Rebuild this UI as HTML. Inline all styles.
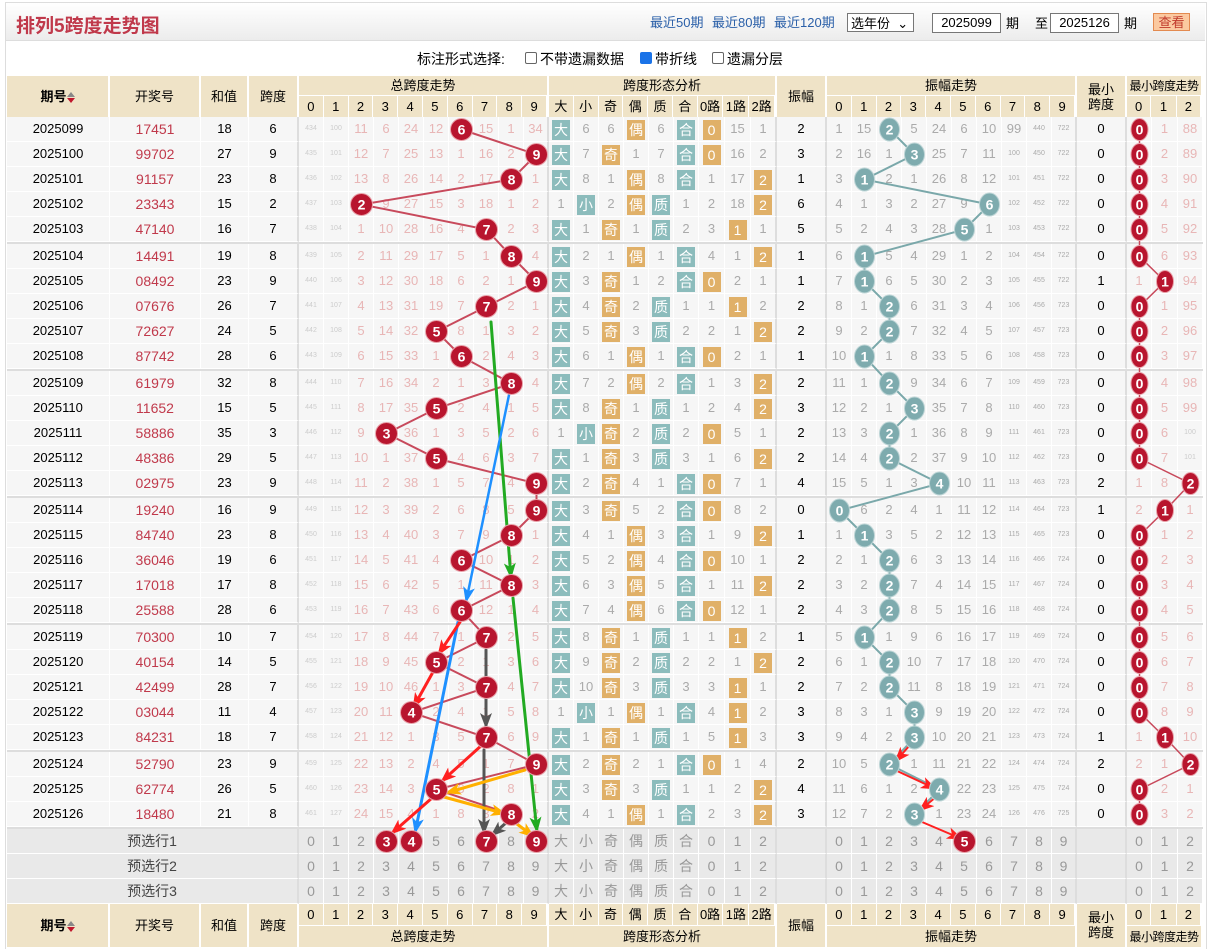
<!DOCTYPE html>
<html><head><meta charset="utf-8"><style>
*{margin:0;padding:0}
body{width:1214px;height:949px;position:relative;background:#fff;font-family:"Liberation Sans","Noto Sans CJK SC",sans-serif;font-size:13px;color:#000;overflow:hidden}
.frame{position:absolute;left:5px;top:2px;width:1200px;height:946px;border:1px solid #ddd;border-bottom:none}
.top{position:absolute;left:6px;top:3px;width:1199px;height:37px;background:linear-gradient(#fff,#ececec);border-bottom:1px solid #ddd}
.title{position:absolute;left:10px;top:8px;font-size:19px;font-weight:bold;color:#c0394b}
.lk{position:absolute;top:12px;color:#2a5fa8;font-size:13px}
.sel{position:absolute;left:847px;top:13px;width:67px;height:19px;border:1px solid #777;background:#fff;font-size:13px;line-height:19px;padding-left:3px;box-sizing:border-box}
.inp{position:absolute;top:13px;width:69px;height:20px;border:1px solid #777;background:#fff;box-sizing:border-box;text-align:center;line-height:18px;font-size:13px}
.tx{position:absolute;top:13px;font-size:13px}
.btn{position:absolute;left:1153px;top:13px;width:37px;height:18px;background:#fbc9a0;border:1px solid #e38a50;color:#c0392b;text-align:center;line-height:17px;font-size:13px;box-sizing:border-box}
.opt{position:absolute;top:49px;font-size:14px}
.cb{position:absolute;top:52px;width:12px;height:12px;border:1px solid #666;border-radius:2px;background:#fff;box-sizing:border-box}
.cb.on{background:#1a73e8;border-color:#1a73e8}
.hd{position:absolute;left:7px;display:flex;height:41px}
.hd>div{background:#efe3c7;border-right:2px solid #fff;box-sizing:border-box;text-align:center}
.hc{line-height:41px;font-size:13px}
.hg{display:flex;flex-direction:column}
.ft .hg{flex-direction:column-reverse}
.ht{height:20px;line-height:20px;border-bottom:1px solid #fff;font-size:13px;white-space:nowrap;overflow:hidden}
.ht.sm{font-size:12px;letter-spacing:-0.5px}
.ft .ht{border-bottom:none;border-top:1px solid #fff;height:22px;line-height:22px}
.hs{display:flex;height:21px}
.hs span{width:25px;line-height:21px;border-right:1px solid #fff;box-sizing:border-box;font-size:13px}
.hs span.w{width:26px}
.sa{display:inline-block;width:8px;height:12px;position:relative;vertical-align:middle}
.sa:before{content:"";position:absolute;left:0;top:0;border:4px solid transparent;border-bottom:5px solid #888;border-top:0}
.sa:after{content:"";position:absolute;left:0;top:6px;border:4px solid transparent;border-top:5px solid #c0182d;border-bottom:0}
.tb{position:absolute;left:7px;top:117px}
.r{display:flex;height:25px;background:#f6f6f6}
.r i{font-style:normal;display:block;height:25px;line-height:24px;text-align:center;box-sizing:border-box;border-right:1px solid #fff;border-bottom:1px solid #fff;font-size:13px;white-space:nowrap;overflow:visible}
.r i:nth-child(1){width:103px}
.r i:nth-child(2){width:91px;color:#c0394b;font-size:14px}
.r i:nth-child(3){width:48px}
.r i:nth-child(4){width:50px}
.r i:nth-child(n+5):nth-child(-n+14){width:25px;color:#e8b6b6}
.r i:nth-child(n+15):nth-child(-n+23){width:25px;color:#aaa}
.r i:nth-child(n+21):nth-child(-n+23){width:26px}
.r i:nth-child(24){width:50px}
.r i:nth-child(n+25):nth-child(-n+34){width:25px;color:#aaa}
.r i:nth-child(35){width:50px}
.r i:nth-child(n+36){width:25px;color:#e8b6b6}
.r i:nth-child(37){width:26px}
.r i:nth-child(4),.r i:nth-child(14),.r i:nth-child(23),.r i:nth-child(24),.r i:nth-child(34),.r i:nth-child(35){border-right:2px solid #ddd}
.r i.t{font-size:7px;color:#ccc}
.r i:nth-child(n+5):nth-child(-n+6).t{color:#ccc}
b{display:inline-block;width:18px;height:20px;line-height:20px;color:#fff;font-weight:normal;font-size:14px;vertical-align:middle}
b.g{background:#8cbcbc}b.o{background:#e0b068}
.sep{height:2px;background:#ddd}
.p{background:#e9e9e9}
.p i{color:#999!important;font-size:14px!important}
.p i:nth-child(1){width:292px;color:#444!important;border-right:2px solid #ddd}
.p i:nth-child(2),.p i:nth-child(3),.p i:nth-child(4){display:none}
svg{position:absolute;left:0;top:0}
</style></head><body>
<div class="frame"></div>
<div class="top">
<div class="title">排列5跨度走势图</div>
</div>
<span class="lk" style="left:650px">最近50期</span>
<span class="lk" style="left:712px">最近80期</span>
<span class="lk" style="left:774px">最近120期</span>
<div class="sel">选年份 &nbsp;⌄</div>
<div class="inp" style="left:932px">2025099</div><span class="tx" style="left:1006px">期</span>
<span class="tx" style="left:1035px">至</span>
<div class="inp" style="left:1050px">2025126</div><span class="tx" style="left:1124px">期</span>
<div class="btn">查看</div>
<span class="opt" style="left:417px">标注形式选择:</span>
<span class="cb" style="left:525px"></span><span class="opt" style="left:540px">不带遗漏数据</span>
<span class="cb on" style="left:640px"></span><span class="opt" style="left:655px">带折线</span>
<span class="cb" style="left:712px"></span><span class="opt" style="left:727px">遗漏分层</span>

<div class="hd" style="top:76px">
<div class="hc" style="width:103px"><strong>期号</strong><span class="sa"></span></div>
<div class="hc" style="width:91px">开奖号</div>
<div class="hc" style="width:48px">和值</div>
<div class="hc" style="width:50px">跨度</div>
<div class="hg" style="width:250px"><div class="ht">总跨度走势</div><div class="hs"><span>0</span><span>1</span><span>2</span><span>3</span><span>4</span><span>5</span><span>6</span><span>7</span><span>8</span><span>9</span></div></div>
<div class="hg" style="width:228px"><div class="ht">跨度形态分析</div><div class="hs"><span>大</span><span>小</span><span>奇</span><span>偶</span><span>质</span><span>合</span><span class="w">0路</span><span class="w">1路</span><span class="w">2路</span></div></div>
<div class="hc" style="width:50px">振幅</div>
<div class="hg" style="width:250px"><div class="ht">振幅走势</div><div class="hs"><span>0</span><span>1</span><span>2</span><span>3</span><span>4</span><span>5</span><span>6</span><span>7</span><span>8</span><span>9</span></div></div>
<div class="hc" style="width:50px;line-height:15px;padding-top:6px">最小<br>跨度</div>
<div class="hg" style="width:76px"><div class="ht sm">最小跨度走势</div><div class="hs"><span>0</span><span class="w">1</span><span>2</span></div></div>
</div>

<div class="tb">
<div class="r"><i>2025099</i><i>17451</i><i>18</i><i>6</i><i class=t>434</i><i class=t>100</i><i>11</i><i>6</i><i>24</i><i>12</i><i></i><i>15</i><i>1</i><i>34</i><i><b class=g>大</b></i><i>6</i><i>6</i><i><b class=o>偶</b></i><i>6</i><i><b class=g>合</b></i><i><b class=o>0</b></i><i>15</i><i>1</i><i>2</i><i>1</i><i>15</i><i></i><i>5</i><i>24</i><i>6</i><i>10</i><i>99</i><i class=t>440</i><i class=t>722</i><i>0</i><i></i><i>1</i><i>88</i></div>
<div class="r"><i>2025100</i><i>99702</i><i>27</i><i>9</i><i class=t>435</i><i class=t>101</i><i>12</i><i>7</i><i>25</i><i>13</i><i>1</i><i>16</i><i>2</i><i></i><i><b class=g>大</b></i><i>7</i><i><b class=o>奇</b></i><i>1</i><i>7</i><i><b class=g>合</b></i><i><b class=o>0</b></i><i>16</i><i>2</i><i>3</i><i>2</i><i>16</i><i>1</i><i></i><i>25</i><i>7</i><i>11</i><i class=t>100</i><i class=t>450</i><i class=t>722</i><i>0</i><i></i><i>2</i><i>89</i></div>
<div class="r"><i>2025101</i><i>91157</i><i>23</i><i>8</i><i class=t>436</i><i class=t>102</i><i>13</i><i>8</i><i>26</i><i>14</i><i>2</i><i>17</i><i></i><i>1</i><i><b class=g>大</b></i><i>8</i><i>1</i><i><b class=o>偶</b></i><i>8</i><i><b class=g>合</b></i><i>1</i><i>17</i><i><b class=o>2</b></i><i>1</i><i>3</i><i></i><i>2</i><i>1</i><i>26</i><i>8</i><i>12</i><i class=t>101</i><i class=t>451</i><i class=t>722</i><i>0</i><i></i><i>3</i><i>90</i></div>
<div class="r"><i>2025102</i><i>23343</i><i>15</i><i>2</i><i class=t>437</i><i class=t>103</i><i></i><i>9</i><i>27</i><i>15</i><i>3</i><i>18</i><i>1</i><i>2</i><i>1</i><i><b class=g>小</b></i><i>2</i><i><b class=o>偶</b></i><i><b class=g>质</b></i><i>1</i><i>2</i><i>18</i><i><b class=o>2</b></i><i>6</i><i>4</i><i>1</i><i>3</i><i>2</i><i>27</i><i>9</i><i></i><i class=t>102</i><i class=t>452</i><i class=t>722</i><i>0</i><i></i><i>4</i><i>91</i></div>
<div class="r"><i>2025103</i><i>47140</i><i>16</i><i>7</i><i class=t>438</i><i class=t>104</i><i>1</i><i>10</i><i>28</i><i>16</i><i>4</i><i></i><i>2</i><i>3</i><i><b class=g>大</b></i><i>1</i><i><b class=o>奇</b></i><i>1</i><i><b class=g>质</b></i><i>2</i><i>3</i><i><b class=o>1</b></i><i>1</i><i>5</i><i>5</i><i>2</i><i>4</i><i>3</i><i>28</i><i></i><i>1</i><i class=t>103</i><i class=t>453</i><i class=t>722</i><i>0</i><i></i><i>5</i><i>92</i></div>
<div class="sep"></div>
<div class="r"><i>2025104</i><i>14491</i><i>19</i><i>8</i><i class=t>439</i><i class=t>105</i><i>2</i><i>11</i><i>29</i><i>17</i><i>5</i><i>1</i><i></i><i>4</i><i><b class=g>大</b></i><i>2</i><i>1</i><i><b class=o>偶</b></i><i>1</i><i><b class=g>合</b></i><i>4</i><i>1</i><i><b class=o>2</b></i><i>1</i><i>6</i><i></i><i>5</i><i>4</i><i>29</i><i>1</i><i>2</i><i class=t>104</i><i class=t>454</i><i class=t>722</i><i>0</i><i></i><i>6</i><i>93</i></div>
<div class="r"><i>2025105</i><i>08492</i><i>23</i><i>9</i><i class=t>440</i><i class=t>106</i><i>3</i><i>12</i><i>30</i><i>18</i><i>6</i><i>2</i><i>1</i><i></i><i><b class=g>大</b></i><i>3</i><i><b class=o>奇</b></i><i>1</i><i>2</i><i><b class=g>合</b></i><i><b class=o>0</b></i><i>2</i><i>1</i><i>1</i><i>7</i><i></i><i>6</i><i>5</i><i>30</i><i>2</i><i>3</i><i class=t>105</i><i class=t>455</i><i class=t>722</i><i>1</i><i>1</i><i></i><i>94</i></div>
<div class="r"><i>2025106</i><i>07676</i><i>26</i><i>7</i><i class=t>441</i><i class=t>107</i><i>4</i><i>13</i><i>31</i><i>19</i><i>7</i><i></i><i>2</i><i>1</i><i><b class=g>大</b></i><i>4</i><i><b class=o>奇</b></i><i>2</i><i><b class=g>质</b></i><i>1</i><i>1</i><i><b class=o>1</b></i><i>2</i><i>2</i><i>8</i><i>1</i><i></i><i>6</i><i>31</i><i>3</i><i>4</i><i class=t>106</i><i class=t>456</i><i class=t>723</i><i>0</i><i></i><i>1</i><i>95</i></div>
<div class="r"><i>2025107</i><i>72627</i><i>24</i><i>5</i><i class=t>442</i><i class=t>108</i><i>5</i><i>14</i><i>32</i><i></i><i>8</i><i>1</i><i>3</i><i>2</i><i><b class=g>大</b></i><i>5</i><i><b class=o>奇</b></i><i>3</i><i><b class=g>质</b></i><i>2</i><i>2</i><i>1</i><i><b class=o>2</b></i><i>2</i><i>9</i><i>2</i><i></i><i>7</i><i>32</i><i>4</i><i>5</i><i class=t>107</i><i class=t>457</i><i class=t>723</i><i>0</i><i></i><i>2</i><i>96</i></div>
<div class="r"><i>2025108</i><i>87742</i><i>28</i><i>6</i><i class=t>443</i><i class=t>109</i><i>6</i><i>15</i><i>33</i><i>1</i><i></i><i>2</i><i>4</i><i>3</i><i><b class=g>大</b></i><i>6</i><i>1</i><i><b class=o>偶</b></i><i>1</i><i><b class=g>合</b></i><i><b class=o>0</b></i><i>2</i><i>1</i><i>1</i><i>10</i><i></i><i>1</i><i>8</i><i>33</i><i>5</i><i>6</i><i class=t>108</i><i class=t>458</i><i class=t>723</i><i>0</i><i></i><i>3</i><i>97</i></div>
<div class="sep"></div>
<div class="r"><i>2025109</i><i>61979</i><i>32</i><i>8</i><i class=t>444</i><i class=t>110</i><i>7</i><i>16</i><i>34</i><i>2</i><i>1</i><i>3</i><i></i><i>4</i><i><b class=g>大</b></i><i>7</i><i>2</i><i><b class=o>偶</b></i><i>2</i><i><b class=g>合</b></i><i>1</i><i>3</i><i><b class=o>2</b></i><i>2</i><i>11</i><i>1</i><i></i><i>9</i><i>34</i><i>6</i><i>7</i><i class=t>109</i><i class=t>459</i><i class=t>723</i><i>0</i><i></i><i>4</i><i>98</i></div>
<div class="r"><i>2025110</i><i>11652</i><i>15</i><i>5</i><i class=t>445</i><i class=t>111</i><i>8</i><i>17</i><i>35</i><i></i><i>2</i><i>4</i><i>1</i><i>5</i><i><b class=g>大</b></i><i>8</i><i><b class=o>奇</b></i><i>1</i><i><b class=g>质</b></i><i>1</i><i>2</i><i>4</i><i><b class=o>2</b></i><i>3</i><i>12</i><i>2</i><i>1</i><i></i><i>35</i><i>7</i><i>8</i><i class=t>110</i><i class=t>460</i><i class=t>723</i><i>0</i><i></i><i>5</i><i>99</i></div>
<div class="r"><i>2025111</i><i>58886</i><i>35</i><i>3</i><i class=t>446</i><i class=t>112</i><i>9</i><i></i><i>36</i><i>1</i><i>3</i><i>5</i><i>2</i><i>6</i><i>1</i><i><b class=g>小</b></i><i><b class=o>奇</b></i><i>2</i><i><b class=g>质</b></i><i>2</i><i><b class=o>0</b></i><i>5</i><i>1</i><i>2</i><i>13</i><i>3</i><i></i><i>1</i><i>36</i><i>8</i><i>9</i><i class=t>111</i><i class=t>461</i><i class=t>723</i><i>0</i><i></i><i>6</i><i class=t>100</i></div>
<div class="r"><i>2025112</i><i>48386</i><i>29</i><i>5</i><i class=t>447</i><i class=t>113</i><i>10</i><i>1</i><i>37</i><i></i><i>4</i><i>6</i><i>3</i><i>7</i><i><b class=g>大</b></i><i>1</i><i><b class=o>奇</b></i><i>3</i><i><b class=g>质</b></i><i>3</i><i>1</i><i>6</i><i><b class=o>2</b></i><i>2</i><i>14</i><i>4</i><i></i><i>2</i><i>37</i><i>9</i><i>10</i><i class=t>112</i><i class=t>462</i><i class=t>723</i><i>0</i><i></i><i>7</i><i class=t>101</i></div>
<div class="r"><i>2025113</i><i>02975</i><i>23</i><i>9</i><i class=t>448</i><i class=t>114</i><i>11</i><i>2</i><i>38</i><i>1</i><i>5</i><i>7</i><i>4</i><i></i><i><b class=g>大</b></i><i>2</i><i><b class=o>奇</b></i><i>4</i><i>1</i><i><b class=g>合</b></i><i><b class=o>0</b></i><i>7</i><i>1</i><i>4</i><i>15</i><i>5</i><i>1</i><i>3</i><i></i><i>10</i><i>11</i><i class=t>113</i><i class=t>463</i><i class=t>723</i><i>2</i><i>1</i><i>8</i><i></i></div>
<div class="sep"></div>
<div class="r"><i>2025114</i><i>19240</i><i>16</i><i>9</i><i class=t>449</i><i class=t>115</i><i>12</i><i>3</i><i>39</i><i>2</i><i>6</i><i>8</i><i>5</i><i></i><i><b class=g>大</b></i><i>3</i><i><b class=o>奇</b></i><i>5</i><i>2</i><i><b class=g>合</b></i><i><b class=o>0</b></i><i>8</i><i>2</i><i>0</i><i></i><i>6</i><i>2</i><i>4</i><i>1</i><i>11</i><i>12</i><i class=t>114</i><i class=t>464</i><i class=t>723</i><i>1</i><i>2</i><i></i><i>1</i></div>
<div class="r"><i>2025115</i><i>84740</i><i>23</i><i>8</i><i class=t>450</i><i class=t>116</i><i>13</i><i>4</i><i>40</i><i>3</i><i>7</i><i>9</i><i></i><i>1</i><i><b class=g>大</b></i><i>4</i><i>1</i><i><b class=o>偶</b></i><i>3</i><i><b class=g>合</b></i><i>1</i><i>9</i><i><b class=o>2</b></i><i>1</i><i>1</i><i></i><i>3</i><i>5</i><i>2</i><i>12</i><i>13</i><i class=t>115</i><i class=t>465</i><i class=t>723</i><i>0</i><i></i><i>1</i><i>2</i></div>
<div class="r"><i>2025116</i><i>36046</i><i>19</i><i>6</i><i class=t>451</i><i class=t>117</i><i>14</i><i>5</i><i>41</i><i>4</i><i></i><i>10</i><i>1</i><i>2</i><i><b class=g>大</b></i><i>5</i><i>2</i><i><b class=o>偶</b></i><i>4</i><i><b class=g>合</b></i><i><b class=o>0</b></i><i>10</i><i>1</i><i>2</i><i>2</i><i>1</i><i></i><i>6</i><i>3</i><i>13</i><i>14</i><i class=t>116</i><i class=t>466</i><i class=t>724</i><i>0</i><i></i><i>2</i><i>3</i></div>
<div class="r"><i>2025117</i><i>17018</i><i>17</i><i>8</i><i class=t>452</i><i class=t>118</i><i>15</i><i>6</i><i>42</i><i>5</i><i>1</i><i>11</i><i></i><i>3</i><i><b class=g>大</b></i><i>6</i><i>3</i><i><b class=o>偶</b></i><i>5</i><i><b class=g>合</b></i><i>1</i><i>11</i><i><b class=o>2</b></i><i>2</i><i>3</i><i>2</i><i></i><i>7</i><i>4</i><i>14</i><i>15</i><i class=t>117</i><i class=t>467</i><i class=t>724</i><i>0</i><i></i><i>3</i><i>4</i></div>
<div class="r"><i>2025118</i><i>25588</i><i>28</i><i>6</i><i class=t>453</i><i class=t>119</i><i>16</i><i>7</i><i>43</i><i>6</i><i></i><i>12</i><i>1</i><i>4</i><i><b class=g>大</b></i><i>7</i><i>4</i><i><b class=o>偶</b></i><i>6</i><i><b class=g>合</b></i><i><b class=o>0</b></i><i>12</i><i>1</i><i>2</i><i>4</i><i>3</i><i></i><i>8</i><i>5</i><i>15</i><i>16</i><i class=t>118</i><i class=t>468</i><i class=t>724</i><i>0</i><i></i><i>4</i><i>5</i></div>
<div class="sep"></div>
<div class="r"><i>2025119</i><i>70300</i><i>10</i><i>7</i><i class=t>454</i><i class=t>120</i><i>17</i><i>8</i><i>44</i><i>7</i><i>1</i><i></i><i>2</i><i>5</i><i><b class=g>大</b></i><i>8</i><i><b class=o>奇</b></i><i>1</i><i><b class=g>质</b></i><i>1</i><i>1</i><i><b class=o>1</b></i><i>2</i><i>1</i><i>5</i><i></i><i>1</i><i>9</i><i>6</i><i>16</i><i>17</i><i class=t>119</i><i class=t>469</i><i class=t>724</i><i>0</i><i></i><i>5</i><i>6</i></div>
<div class="r"><i>2025120</i><i>40154</i><i>14</i><i>5</i><i class=t>455</i><i class=t>121</i><i>18</i><i>9</i><i>45</i><i></i><i>2</i><i>1</i><i>3</i><i>6</i><i><b class=g>大</b></i><i>9</i><i><b class=o>奇</b></i><i>2</i><i><b class=g>质</b></i><i>2</i><i>2</i><i>1</i><i><b class=o>2</b></i><i>2</i><i>6</i><i>1</i><i></i><i>10</i><i>7</i><i>17</i><i>18</i><i class=t>120</i><i class=t>470</i><i class=t>724</i><i>0</i><i></i><i>6</i><i>7</i></div>
<div class="r"><i>2025121</i><i>42499</i><i>28</i><i>7</i><i class=t>456</i><i class=t>122</i><i>19</i><i>10</i><i>46</i><i>1</i><i>3</i><i></i><i>4</i><i>7</i><i><b class=g>大</b></i><i>10</i><i><b class=o>奇</b></i><i>3</i><i><b class=g>质</b></i><i>3</i><i>3</i><i><b class=o>1</b></i><i>1</i><i>2</i><i>7</i><i>2</i><i></i><i>11</i><i>8</i><i>18</i><i>19</i><i class=t>121</i><i class=t>471</i><i class=t>724</i><i>0</i><i></i><i>7</i><i>8</i></div>
<div class="r"><i>2025122</i><i>03044</i><i>11</i><i>4</i><i class=t>457</i><i class=t>123</i><i>20</i><i>11</i><i></i><i>2</i><i>4</i><i>1</i><i>5</i><i>8</i><i>1</i><i><b class=g>小</b></i><i>1</i><i><b class=o>偶</b></i><i>1</i><i><b class=g>合</b></i><i>4</i><i><b class=o>1</b></i><i>2</i><i>3</i><i>8</i><i>3</i><i>1</i><i></i><i>9</i><i>19</i><i>20</i><i class=t>122</i><i class=t>472</i><i class=t>724</i><i>0</i><i></i><i>8</i><i>9</i></div>
<div class="r"><i>2025123</i><i>84231</i><i>18</i><i>7</i><i class=t>458</i><i class=t>124</i><i>21</i><i>12</i><i>1</i><i>3</i><i>5</i><i></i><i>6</i><i>9</i><i><b class=g>大</b></i><i>1</i><i><b class=o>奇</b></i><i>1</i><i><b class=g>质</b></i><i>1</i><i>5</i><i><b class=o>1</b></i><i>3</i><i>3</i><i>9</i><i>4</i><i>2</i><i></i><i>10</i><i>20</i><i>21</i><i class=t>123</i><i class=t>473</i><i class=t>724</i><i>1</i><i>1</i><i></i><i>10</i></div>
<div class="sep"></div>
<div class="r"><i>2025124</i><i>52790</i><i>23</i><i>9</i><i class=t>459</i><i class=t>125</i><i>22</i><i>13</i><i>2</i><i>4</i><i>5</i><i>1</i><i>7</i><i></i><i><b class=g>大</b></i><i>2</i><i><b class=o>奇</b></i><i>2</i><i>1</i><i><b class=g>合</b></i><i><b class=o>0</b></i><i>1</i><i>4</i><i>2</i><i>10</i><i>5</i><i></i><i>1</i><i>11</i><i>21</i><i>22</i><i class=t>124</i><i class=t>474</i><i class=t>724</i><i>2</i><i>2</i><i>1</i><i></i></div>
<div class="r"><i>2025125</i><i>62774</i><i>26</i><i>5</i><i class=t>460</i><i class=t>126</i><i>23</i><i>14</i><i>3</i><i></i><i>6</i><i>2</i><i>8</i><i>1</i><i><b class=g>大</b></i><i>3</i><i><b class=o>奇</b></i><i>3</i><i><b class=g>质</b></i><i>1</i><i>1</i><i>2</i><i><b class=o>2</b></i><i>4</i><i>11</i><i>6</i><i>1</i><i>2</i><i></i><i>22</i><i>23</i><i class=t>125</i><i class=t>475</i><i class=t>724</i><i>0</i><i></i><i>2</i><i>1</i></div>
<div class="r"><i>2025126</i><i>18480</i><i>21</i><i>8</i><i class=t>461</i><i class=t>127</i><i>24</i><i>15</i><i>4</i><i>1</i><i>8</i><i>3</i><i></i><i>2</i><i><b class=g>大</b></i><i>4</i><i>1</i><i><b class=o>偶</b></i><i>1</i><i><b class=g>合</b></i><i>2</i><i>3</i><i><b class=o>2</b></i><i>3</i><i>12</i><i>7</i><i>2</i><i></i><i>1</i><i>23</i><i>24</i><i class=t>126</i><i class=t>476</i><i class=t>725</i><i>0</i><i></i><i>3</i><i>2</i></div>
<div class="sep"></div>
<div class="r p"><i>预选行1</i><i></i><i></i><i></i><i>0</i><i>1</i><i>2</i><i></i><i></i><i>5</i><i>6</i><i></i><i>8</i><i></i><i>大</i><i>小</i><i>奇</i><i>偶</i><i>质</i><i>合</i><i>0</i><i>1</i><i>2</i><i></i><i>0</i><i>1</i><i>2</i><i>3</i><i>4</i><i></i><i>6</i><i>7</i><i>8</i><i>9</i><i></i><i>0</i><i>1</i><i>2</i></div>
<div class="r p"><i>预选行2</i><i></i><i></i><i></i><i>0</i><i>1</i><i>2</i><i>3</i><i>4</i><i>5</i><i>6</i><i>7</i><i>8</i><i>9</i><i>大</i><i>小</i><i>奇</i><i>偶</i><i>质</i><i>合</i><i>0</i><i>1</i><i>2</i><i></i><i>0</i><i>1</i><i>2</i><i>3</i><i>4</i><i>5</i><i>6</i><i>7</i><i>8</i><i>9</i><i></i><i>0</i><i>1</i><i>2</i></div>
<div class="r p"><i>预选行3</i><i></i><i></i><i></i><i>0</i><i>1</i><i>2</i><i>3</i><i>4</i><i>5</i><i>6</i><i>7</i><i>8</i><i>9</i><i>大</i><i>小</i><i>奇</i><i>偶</i><i>质</i><i>合</i><i>0</i><i>1</i><i>2</i><i></i><i>0</i><i>1</i><i>2</i><i>3</i><i>4</i><i>5</i><i>6</i><i>7</i><i>8</i><i>9</i><i></i><i>0</i><i>1</i><i>2</i></div>
</div>

<div class="hd ft" style="top:904px;height:43px">
<div class="hc" style="width:103px;line-height:43px"><strong>期号</strong><span class="sa"></span></div>
<div class="hc" style="width:91px;line-height:43px">开奖号</div>
<div class="hc" style="width:48px;line-height:43px">和值</div>
<div class="hc" style="width:50px;line-height:43px">跨度</div>
<div class="hg" style="width:250px"><div class="ht">总跨度走势</div><div class="hs"><span>0</span><span>1</span><span>2</span><span>3</span><span>4</span><span>5</span><span>6</span><span>7</span><span>8</span><span>9</span></div></div>
<div class="hg" style="width:228px"><div class="ht">跨度形态分析</div><div class="hs"><span>大</span><span>小</span><span>奇</span><span>偶</span><span>质</span><span>合</span><span class="w">0路</span><span class="w">1路</span><span class="w">2路</span></div></div>
<div class="hc" style="width:50px;line-height:43px">振幅</div>
<div class="hg" style="width:250px"><div class="ht">振幅走势</div><div class="hs"><span>0</span><span>1</span><span>2</span><span>3</span><span>4</span><span>5</span><span>6</span><span>7</span><span>8</span><span>9</span></div></div>
<div class="hc" style="width:50px;line-height:15px;padding-top:6px">最小<br>跨度</div>
<div class="hg" style="width:76px"><div class="ht sm">最小跨度走势</div><div class="hs"><span>0</span><span class="w">1</span><span>2</span></div></div>
</div>

<svg width="1214" height="949" viewBox="0 0 1214 949">
<defs>
<marker id="mR" viewBox="0 0 16 12" refX="15" refY="6" markerWidth="16" markerHeight="12" markerUnits="userSpaceOnUse" orient="auto"><path d="M0,0 L16,6 L0,12 L4,6z" fill="#ff2020"/></marker>
<marker id="mB" viewBox="0 0 16 12" refX="15" refY="6" markerWidth="16" markerHeight="12" markerUnits="userSpaceOnUse" orient="auto"><path d="M0,0 L16,6 L0,12 L4,6z" fill="#1e90ff"/></marker>
<marker id="mG" viewBox="0 0 16 12" refX="15" refY="6" markerWidth="16" markerHeight="12" markerUnits="userSpaceOnUse" orient="auto"><path d="M0,0 L16,6 L0,12 L4,6z" fill="#22aa22"/></marker>
<marker id="mK" viewBox="0 0 16 12" refX="15" refY="6" markerWidth="16" markerHeight="12" markerUnits="userSpaceOnUse" orient="auto"><path d="M0,0 L16,6 L0,12 L4,6z" fill="#555"/></marker>
<marker id="mO" viewBox="0 0 16 12" refX="15" refY="6" markerWidth="16" markerHeight="12" markerUnits="userSpaceOnUse" orient="auto"><path d="M0,0 L16,6 L0,12 L4,6z" fill="#ffb000"/></marker>
</defs>
<polyline fill="none" stroke="#c84a5c" stroke-width="2" points="461.5,129.5 536.5,154.5 511.5,179.5 361.5,204.5 486.5,229.5 511.5,256.5 536.5,281.5 486.5,306.5 436.5,331.5 461.5,356.5 511.5,383.5 436.5,408.5 386.5,433.5 436.5,458.5 536.5,483.5 536.5,510.5 511.5,535.5 461.5,560.5 511.5,585.5 461.5,610.5 486.5,637.5 436.5,662.5 486.5,687.5 411.5,712.5 486.5,737.5 536.5,764.5 436.5,789.5 511.5,814.5"/>
<polyline fill="none" stroke="#7aa8aa" stroke-width="2" points="889.5,129.5 914.5,154.5 864.5,179.5 989.5,204.5 964.5,229.5 864.5,256.5 864.5,281.5 889.5,306.5 889.5,331.5 864.5,356.5 889.5,383.5 914.5,408.5 889.5,433.5 889.5,458.5 939.5,483.5 839.5,510.5 864.5,535.5 889.5,560.5 889.5,585.5 889.5,610.5 864.5,637.5 889.5,662.5 889.5,687.5 914.5,712.5 914.5,737.5 889.5,764.5 939.5,789.5 914.5,814.5"/>
<polyline fill="none" stroke="#c84a5c" stroke-width="1.5" points="1139.5,129.5 1139.5,256.5 1165,281.5 1139.5,306.5 1139.5,458.5 1190.5,483.5 1165,510.5 1139.5,535.5 1139.5,712.5 1165,737.5 1190.5,764.5 1139.5,789.5 1139.5,814.5"/>
<g stroke-linecap="round">
<line x1="491" y1="322" x2="511" y2="578" stroke="#22aa22" stroke-width="3" marker-end="url(#mG)"/>
<line x1="513" y1="598" x2="537" y2="832" stroke="#22aa22" stroke-width="3" marker-end="url(#mG)"/>
<line x1="509" y1="395" x2="466" y2="602" stroke="#1e90ff" stroke-width="2.5" marker-end="url(#mB)"/>
<line x1="458" y1="622" x2="415" y2="833" stroke="#1e90ff" stroke-width="3" marker-end="url(#mB)"/>
<line x1="460" y1="622" x2="438" y2="655" stroke="#ff2020" stroke-width="3" marker-end="url(#mR)"/>
<line x1="433" y1="672" x2="413" y2="708" stroke="#ff2020" stroke-width="3" marker-end="url(#mR)"/>
<line x1="482" y1="745" x2="441" y2="782" stroke="#ff2020" stroke-width="3" marker-end="url(#mR)"/>
<line x1="432" y1="798" x2="391" y2="834" stroke="#ff2020" stroke-width="3" marker-end="url(#mR)"/>
<line x1="486" y1="650" x2="486" y2="728" stroke="#555" stroke-width="3" marker-end="url(#mK)"/>
<line x1="484" y1="750" x2="484" y2="834" stroke="#555" stroke-width="3" marker-end="url(#mK)"/>
<line x1="507" y1="822" x2="491" y2="836" stroke="#555" stroke-width="3" marker-end="url(#mK)"/>
<line x1="525" y1="770" x2="446" y2="793" stroke="#ffb000" stroke-width="3" marker-end="url(#mO)"/>
<line x1="444" y1="797" x2="506" y2="814" stroke="#ffb000" stroke-width="3" marker-end="url(#mO)"/>
<line x1="517" y1="824" x2="534" y2="837" stroke="#ffb000" stroke-width="3" marker-end="url(#mO)"/>
<line x1="910" y1="745" x2="895" y2="762" stroke="#ff2020" stroke-width="2" marker-end="url(#mR)"/>
<line x1="895" y1="770" x2="936" y2="789" stroke="#ff2020" stroke-width="2" marker-end="url(#mR)"/>
<line x1="936" y1="797" x2="919" y2="811" stroke="#ff2020" stroke-width="2" marker-end="url(#mR)"/>
<line x1="922" y1="822" x2="962" y2="839" stroke="#ff2020" stroke-width="2" marker-end="url(#mR)"/>
</g>
<g fill="#b8152e" stroke="#e8a0a8" stroke-width="1">
<circle cx="461.5" cy="129.5" r="11"/><circle cx="536.5" cy="154.5" r="11"/><circle cx="511.5" cy="179.5" r="11"/><circle cx="361.5" cy="204.5" r="11"/><circle cx="486.5" cy="229.5" r="11"/>
<circle cx="511.5" cy="256.5" r="11"/><circle cx="536.5" cy="281.5" r="11"/><circle cx="486.5" cy="306.5" r="11"/><circle cx="436.5" cy="331.5" r="11"/><circle cx="461.5" cy="356.5" r="11"/>
<circle cx="511.5" cy="383.5" r="11"/><circle cx="436.5" cy="408.5" r="11"/><circle cx="386.5" cy="433.5" r="11"/><circle cx="436.5" cy="458.5" r="11"/><circle cx="536.5" cy="483.5" r="11"/>
<circle cx="536.5" cy="510.5" r="11"/><circle cx="511.5" cy="535.5" r="11"/><circle cx="461.5" cy="560.5" r="11"/><circle cx="511.5" cy="585.5" r="11"/><circle cx="461.5" cy="610.5" r="11"/>
<circle cx="486.5" cy="637.5" r="11"/><circle cx="436.5" cy="662.5" r="11"/><circle cx="486.5" cy="687.5" r="11"/><circle cx="411.5" cy="712.5" r="11"/><circle cx="486.5" cy="737.5" r="11"/>
<circle cx="536.5" cy="764.5" r="11"/><circle cx="436.5" cy="789.5" r="11"/><circle cx="511.5" cy="814.5" r="11"/>
<circle cx="386.5" cy="841.5" r="11"/><circle cx="411.5" cy="841.5" r="11"/><circle cx="486.5" cy="841.5" r="11"/><circle cx="536.5" cy="841.5" r="11"/><circle cx="964.5" cy="841.5" r="11"/>
<ellipse cx="1139.5" cy="129.5" rx="8.5" ry="11"/><ellipse cx="1139.5" cy="154.5" rx="8.5" ry="11"/><ellipse cx="1139.5" cy="179.5" rx="8.5" ry="11"/><ellipse cx="1139.5" cy="204.5" rx="8.5" ry="11"/><ellipse cx="1139.5" cy="229.5" rx="8.5" ry="11"/>
<ellipse cx="1139.5" cy="256.5" rx="8.5" ry="11"/><ellipse cx="1165" cy="281.5" rx="8.5" ry="11"/><ellipse cx="1139.5" cy="306.5" rx="8.5" ry="11"/><ellipse cx="1139.5" cy="331.5" rx="8.5" ry="11"/><ellipse cx="1139.5" cy="356.5" rx="8.5" ry="11"/>
<ellipse cx="1139.5" cy="383.5" rx="8.5" ry="11"/><ellipse cx="1139.5" cy="408.5" rx="8.5" ry="11"/><ellipse cx="1139.5" cy="433.5" rx="8.5" ry="11"/><ellipse cx="1139.5" cy="458.5" rx="8.5" ry="11"/><ellipse cx="1190.5" cy="483.5" rx="8.5" ry="11"/>
<ellipse cx="1165" cy="510.5" rx="8.5" ry="11"/><ellipse cx="1139.5" cy="535.5" rx="8.5" ry="11"/><ellipse cx="1139.5" cy="560.5" rx="8.5" ry="11"/><ellipse cx="1139.5" cy="585.5" rx="8.5" ry="11"/><ellipse cx="1139.5" cy="610.5" rx="8.5" ry="11"/>
<ellipse cx="1139.5" cy="637.5" rx="8.5" ry="11"/><ellipse cx="1139.5" cy="662.5" rx="8.5" ry="11"/><ellipse cx="1139.5" cy="687.5" rx="8.5" ry="11"/><ellipse cx="1139.5" cy="712.5" rx="8.5" ry="11"/><ellipse cx="1165" cy="737.5" rx="8.5" ry="11"/>
<ellipse cx="1190.5" cy="764.5" rx="8.5" ry="11"/><ellipse cx="1139.5" cy="789.5" rx="8.5" ry="11"/><ellipse cx="1139.5" cy="814.5" rx="8.5" ry="11"/>
</g>
<g fill="#7eabae" stroke="#bcd4d5" stroke-width="1">
<ellipse cx="889.5" cy="129.5" rx="10" ry="11.5"/><ellipse cx="914.5" cy="154.5" rx="10" ry="11.5"/><ellipse cx="864.5" cy="179.5" rx="10" ry="11.5"/><ellipse cx="989.5" cy="204.5" rx="10" ry="11.5"/><ellipse cx="964.5" cy="229.5" rx="10" ry="11.5"/>
<ellipse cx="864.5" cy="256.5" rx="10" ry="11.5"/><ellipse cx="864.5" cy="281.5" rx="10" ry="11.5"/><ellipse cx="889.5" cy="306.5" rx="10" ry="11.5"/><ellipse cx="889.5" cy="331.5" rx="10" ry="11.5"/><ellipse cx="864.5" cy="356.5" rx="10" ry="11.5"/>
<ellipse cx="889.5" cy="383.5" rx="10" ry="11.5"/><ellipse cx="914.5" cy="408.5" rx="10" ry="11.5"/><ellipse cx="889.5" cy="433.5" rx="10" ry="11.5"/><ellipse cx="889.5" cy="458.5" rx="10" ry="11.5"/><ellipse cx="939.5" cy="483.5" rx="10" ry="11.5"/>
<ellipse cx="839.5" cy="510.5" rx="10" ry="11.5"/><ellipse cx="864.5" cy="535.5" rx="10" ry="11.5"/><ellipse cx="889.5" cy="560.5" rx="10" ry="11.5"/><ellipse cx="889.5" cy="585.5" rx="10" ry="11.5"/><ellipse cx="889.5" cy="610.5" rx="10" ry="11.5"/>
<ellipse cx="864.5" cy="637.5" rx="10" ry="11.5"/><ellipse cx="889.5" cy="662.5" rx="10" ry="11.5"/><ellipse cx="889.5" cy="687.5" rx="10" ry="11.5"/><ellipse cx="914.5" cy="712.5" rx="10" ry="11.5"/><ellipse cx="914.5" cy="737.5" rx="10" ry="11.5"/>
<ellipse cx="889.5" cy="764.5" rx="10" ry="11.5"/><ellipse cx="939.5" cy="789.5" rx="10" ry="11.5"/><ellipse cx="914.5" cy="814.5" rx="10" ry="11.5"/>
</g>
<g fill="#fff" font-family="Liberation Sans, sans-serif" font-size="14" font-weight="bold" text-anchor="middle">
<text x="461.5" y="134.5">6</text><text x="536.5" y="159.5">9</text><text x="511.5" y="184.5">8</text><text x="361.5" y="209.5">2</text><text x="486.5" y="234.5">7</text>
<text x="511.5" y="261.5">8</text><text x="536.5" y="286.5">9</text><text x="486.5" y="311.5">7</text><text x="436.5" y="336.5">5</text><text x="461.5" y="361.5">6</text>
<text x="511.5" y="388.5">8</text><text x="436.5" y="413.5">5</text><text x="386.5" y="438.5">3</text><text x="436.5" y="463.5">5</text><text x="536.5" y="488.5">9</text>
<text x="536.5" y="515.5">9</text><text x="511.5" y="540.5">8</text><text x="461.5" y="565.5">6</text><text x="511.5" y="590.5">8</text><text x="461.5" y="615.5">6</text>
<text x="486.5" y="642.5">7</text><text x="436.5" y="667.5">5</text><text x="486.5" y="692.5">7</text><text x="411.5" y="717.5">4</text><text x="486.5" y="742.5">7</text>
<text x="536.5" y="769.5">9</text><text x="436.5" y="794.5">5</text><text x="511.5" y="819.5">8</text>
<text x="386.5" y="846.5">3</text><text x="411.5" y="846.5">4</text><text x="486.5" y="846.5">7</text><text x="536.5" y="846.5">9</text><text x="964.5" y="846.5">5</text>
<text x="889.5" y="134.5">2</text><text x="914.5" y="159.5">3</text><text x="864.5" y="184.5">1</text><text x="989.5" y="209.5">6</text><text x="964.5" y="234.5">5</text>
<text x="864.5" y="261.5">1</text><text x="864.5" y="286.5">1</text><text x="889.5" y="311.5">2</text><text x="889.5" y="336.5">2</text><text x="864.5" y="361.5">1</text>
<text x="889.5" y="388.5">2</text><text x="914.5" y="413.5">3</text><text x="889.5" y="438.5">2</text><text x="889.5" y="463.5">2</text><text x="939.5" y="488.5">4</text>
<text x="839.5" y="515.5">0</text><text x="864.5" y="540.5">1</text><text x="889.5" y="565.5">2</text><text x="889.5" y="590.5">2</text><text x="889.5" y="615.5">2</text>
<text x="864.5" y="642.5">1</text><text x="889.5" y="667.5">2</text><text x="889.5" y="692.5">2</text><text x="914.5" y="717.5">3</text><text x="914.5" y="742.5">3</text>
<text x="889.5" y="769.5">2</text><text x="939.5" y="794.5">4</text><text x="914.5" y="819.5">3</text>
<text x="1139.5" y="134.5">0</text><text x="1139.5" y="159.5">0</text><text x="1139.5" y="184.5">0</text><text x="1139.5" y="209.5">0</text><text x="1139.5" y="234.5">0</text>
<text x="1139.5" y="261.5">0</text><text x="1165" y="286.5">1</text><text x="1139.5" y="311.5">0</text><text x="1139.5" y="336.5">0</text><text x="1139.5" y="361.5">0</text>
<text x="1139.5" y="388.5">0</text><text x="1139.5" y="413.5">0</text><text x="1139.5" y="438.5">0</text><text x="1139.5" y="463.5">0</text><text x="1190.5" y="488.5">2</text>
<text x="1165" y="515.5">1</text><text x="1139.5" y="540.5">0</text><text x="1139.5" y="565.5">0</text><text x="1139.5" y="590.5">0</text><text x="1139.5" y="615.5">0</text>
<text x="1139.5" y="642.5">0</text><text x="1139.5" y="667.5">0</text><text x="1139.5" y="692.5">0</text><text x="1139.5" y="717.5">0</text><text x="1165" y="742.5">1</text>
<text x="1190.5" y="769.5">2</text><text x="1139.5" y="794.5">0</text><text x="1139.5" y="819.5">0</text>
</g>
</svg>
</body></html>
